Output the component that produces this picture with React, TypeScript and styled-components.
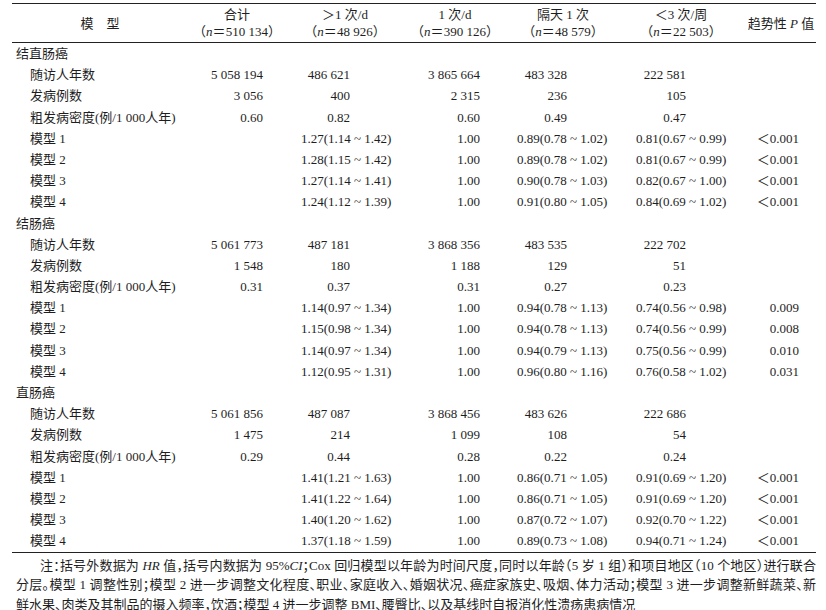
import React from "react";
import styled, { createGlobalStyle } from "styled-components";

const GlobalStyle = createGlobalStyle`
  html, body { margin: 0; padding: 0; background: #ffffff; }
  body {
    font-family: "Liberation Serif", "Noto Sans CJK SC", serif;
    color: #1e1e1e;
    font-size: 13px;
  }
`;

const COLS = "172px 106px 110px 110px 106px 130px 70px";

type ColCfg = { numR: number; ciL: number };
const COL_CFG: ColCfg[] = [
  { numR: 0, ciL: 0 },
  { numR: 27, ciL: 0 },
  { numR: 50, ciL: 11 },
  { numR: 30, ciL: 0 },
  { numR: 49, ciL: 7 },
  { numR: 60, ciL: 20 },
  { numR: 17, ciL: 0 },
];

const Page = styled.div`
  padding: 3px 10px 0 12px;
  width: 804px;
`;

const Table = styled.div`
  border-top: 1px solid #222;
  border-bottom: 1px solid #222;
`;

const HeadRow = styled.div`
  display: grid;
  grid-template-columns: ${COLS};
  height: 38px;
  border-bottom: 1px solid #222;
`;

const HeadCell = styled.div<{ $shift?: number }>`
  display: flex;
  flex-direction: column;
  align-items: center;
  justify-content: center;
  line-height: 17px;
  white-space: nowrap;
  padding-left: ${(p) => p.$shift ?? 0}px;
`;

const Body = styled.div`
  display: flex;
  flex-direction: column;
`;

const Row = styled.div`
  display: grid;
  grid-template-columns: ${COLS};
  height: 21.2px;
  align-items: center;
  line-height: 21.2px;
`;

const Label = styled.div<{ $section?: boolean }>`
  padding-left: ${(p) => (p.$section ? 4 : 18)}px;
  white-space: nowrap;
`;

const Cell = styled.div<{ $ci: boolean; $numR: number; $ciL: number }>`
  white-space: nowrap;
  text-align: ${(p) => (p.$ci ? "left" : "right")};
  padding-left: ${(p) => (p.$ci ? p.$ciL : 0)}px;
  padding-right: ${(p) => (p.$ci ? 0 : p.$numR)}px;
`;

const Note = styled.div`
  padding-top: 3px;
  line-height: 19.5px;
  font-size: 13px;
  font-feature-settings: "halt";
`;

const NoteLine = styled.div<{ $indent?: boolean; $last?: boolean }>`
  text-align: justify;
  text-align-last: ${(p) => (p.$last ? "left" : "justify")};
  text-indent: ${(p) => (p.$indent ? 24 : 0)}px;
  padding-left: 4px;
  white-space: nowrap;
`;

const It = styled.i`
  font-style: italic;
`;

type DataRow = { label: string; vals: string[] };
type Section = { title: string; rows: DataRow[] };

const mk = (label: string, ...vals: string[]): DataRow => ({ label, vals });

const SECTIONS: Section[] = [
  {
    title: "结直肠癌",
    rows: [
      mk("随访人年数", "5 058 194", "486 621", "3 865 664", "483 328", "222 581", ""),
      mk("发病例数", "3 056", "400", "2 315", "236", "105", ""),
      mk("粗发病密度(例/1 000人年)", "0.60", "0.82", "0.60", "0.49", "0.47", ""),
      mk("模型 1", "", "1.27(1.14 ~ 1.42)", "1.00", "0.89(0.78 ~ 1.02)", "0.81(0.67 ~ 0.99)", "＜0.001"),
      mk("模型 2", "", "1.28(1.15 ~ 1.42)", "1.00", "0.89(0.78 ~ 1.02)", "0.81(0.67 ~ 0.99)", "＜0.001"),
      mk("模型 3", "", "1.27(1.14 ~ 1.41)", "1.00", "0.90(0.78 ~ 1.03)", "0.82(0.67 ~ 1.00)", "＜0.001"),
      mk("模型 4", "", "1.24(1.12 ~ 1.39)", "1.00", "0.91(0.80 ~ 1.05)", "0.84(0.69 ~ 1.02)", "＜0.001"),
    ],
  },
  {
    title: "结肠癌",
    rows: [
      mk("随访人年数", "5 061 773", "487 181", "3 868 356", "483 535", "222 702", ""),
      mk("发病例数", "1 548", "180", "1 188", "129", "51", ""),
      mk("粗发病密度(例/1 000人年)", "0.31", "0.37", "0.31", "0.27", "0.23", ""),
      mk("模型 1", "", "1.14(0.97 ~ 1.34)", "1.00", "0.94(0.78 ~ 1.13)", "0.74(0.56 ~ 0.98)", "0.009"),
      mk("模型 2", "", "1.15(0.98 ~ 1.34)", "1.00", "0.94(0.78 ~ 1.13)", "0.74(0.56 ~ 0.99)", "0.008"),
      mk("模型 3", "", "1.14(0.97 ~ 1.34)", "1.00", "0.94(0.79 ~ 1.13)", "0.75(0.56 ~ 0.99)", "0.010"),
      mk("模型 4", "", "1.12(0.95 ~ 1.31)", "1.00", "0.96(0.80 ~ 1.16)", "0.76(0.58 ~ 1.02)", "0.031"),
    ],
  },
  {
    title: "直肠癌",
    rows: [
      mk("随访人年数", "5 061 856", "487 087", "3 868 456", "483 626", "222 686", ""),
      mk("发病例数", "1 475", "214", "1 099", "108", "54", ""),
      mk("粗发病密度(例/1 000人年)", "0.29", "0.44", "0.28", "0.22", "0.24", ""),
      mk("模型 1", "", "1.41(1.21 ~ 1.63)", "1.00", "0.86(0.71 ~ 1.05)", "0.91(0.69 ~ 1.20)", "＜0.001"),
      mk("模型 2", "", "1.41(1.22 ~ 1.64)", "1.00", "0.86(0.71 ~ 1.05)", "0.91(0.69 ~ 1.20)", "＜0.001"),
      mk("模型 3", "", "1.40(1.20 ~ 1.62)", "1.00", "0.87(0.72 ~ 1.07)", "0.92(0.70 ~ 1.22)", "＜0.001"),
      mk("模型 4", "", "1.37(1.18 ~ 1.59)", "1.00", "0.89(0.73 ~ 1.08)", "0.94(0.71 ~ 1.24)", "＜0.001"),
    ],
  },
];

const HEADERS: { top: string; n?: string }[] = [
  { top: "合计", n: "510 134" },
  { top: "＞1 次/d", n: "48 926" },
  { top: "1 次/d", n: "390 126" },
  { top: "隔天 1 次", n: "48 579" },
  { top: "＜3 次/周", n: "22 503" },
];

export default function App() {
  return (
    <>
      <GlobalStyle />
      <Page>
        <Table>
          <HeadRow>
            <HeadCell $shift={4}>模　型</HeadCell>
            {HEADERS.map((h) => (
              <HeadCell key={h.top}>
                <span>{h.top}</span>
                <span>
                  （<It>n</It>＝{h.n}）
                </span>
              </HeadCell>
            ))}
            <HeadCell>
              <span>
                趋势性 <It>P</It> 值
              </span>
            </HeadCell>
          </HeadRow>
          <Body>
            {SECTIONS.map((s) => (
              <React.Fragment key={s.title}>
                <Row>
                  <Label $section>{s.title}</Label>
                </Row>
                {s.rows.map((r, i) => (
                  <Row key={i}>
                    <Label>{r.label}</Label>
                    {r.vals.map((v, j) => (
                      <Cell
                        key={j}
                        $ci={v.includes("(")}
                        $numR={COL_CFG[j + 1].numR}
                        $ciL={COL_CFG[j + 1].ciL}
                      >
                        {v}
                      </Cell>
                    ))}
                  </Row>
                ))}
              </React.Fragment>
            ))}
          </Body>
        </Table>
        <Note>
          <NoteLine $indent>
            注：括号外数据为 <It>HR</It> 值，括号内数据为 95%<It>CI</It>；Cox 回归模型以年龄为时间尺度，同时以年龄（5 岁 1 组）和项目地区（10 个地区）进行联合
          </NoteLine>
          <NoteLine>
            分层。模型 1 调整性别；模型 2 进一步调整文化程度、职业、家庭收入、婚姻状况、癌症家族史、吸烟、体力活动；模型 3 进一步调整新鲜蔬菜、新
          </NoteLine>
          <NoteLine $last>
            鲜水果、肉类及其制品的摄入频率，饮酒；模型 4 进一步调整 BMI、腰臀比、以及基线时自报消化性溃疡患病情况
          </NoteLine>
        </Note>
      </Page>
    </>
  );
}
